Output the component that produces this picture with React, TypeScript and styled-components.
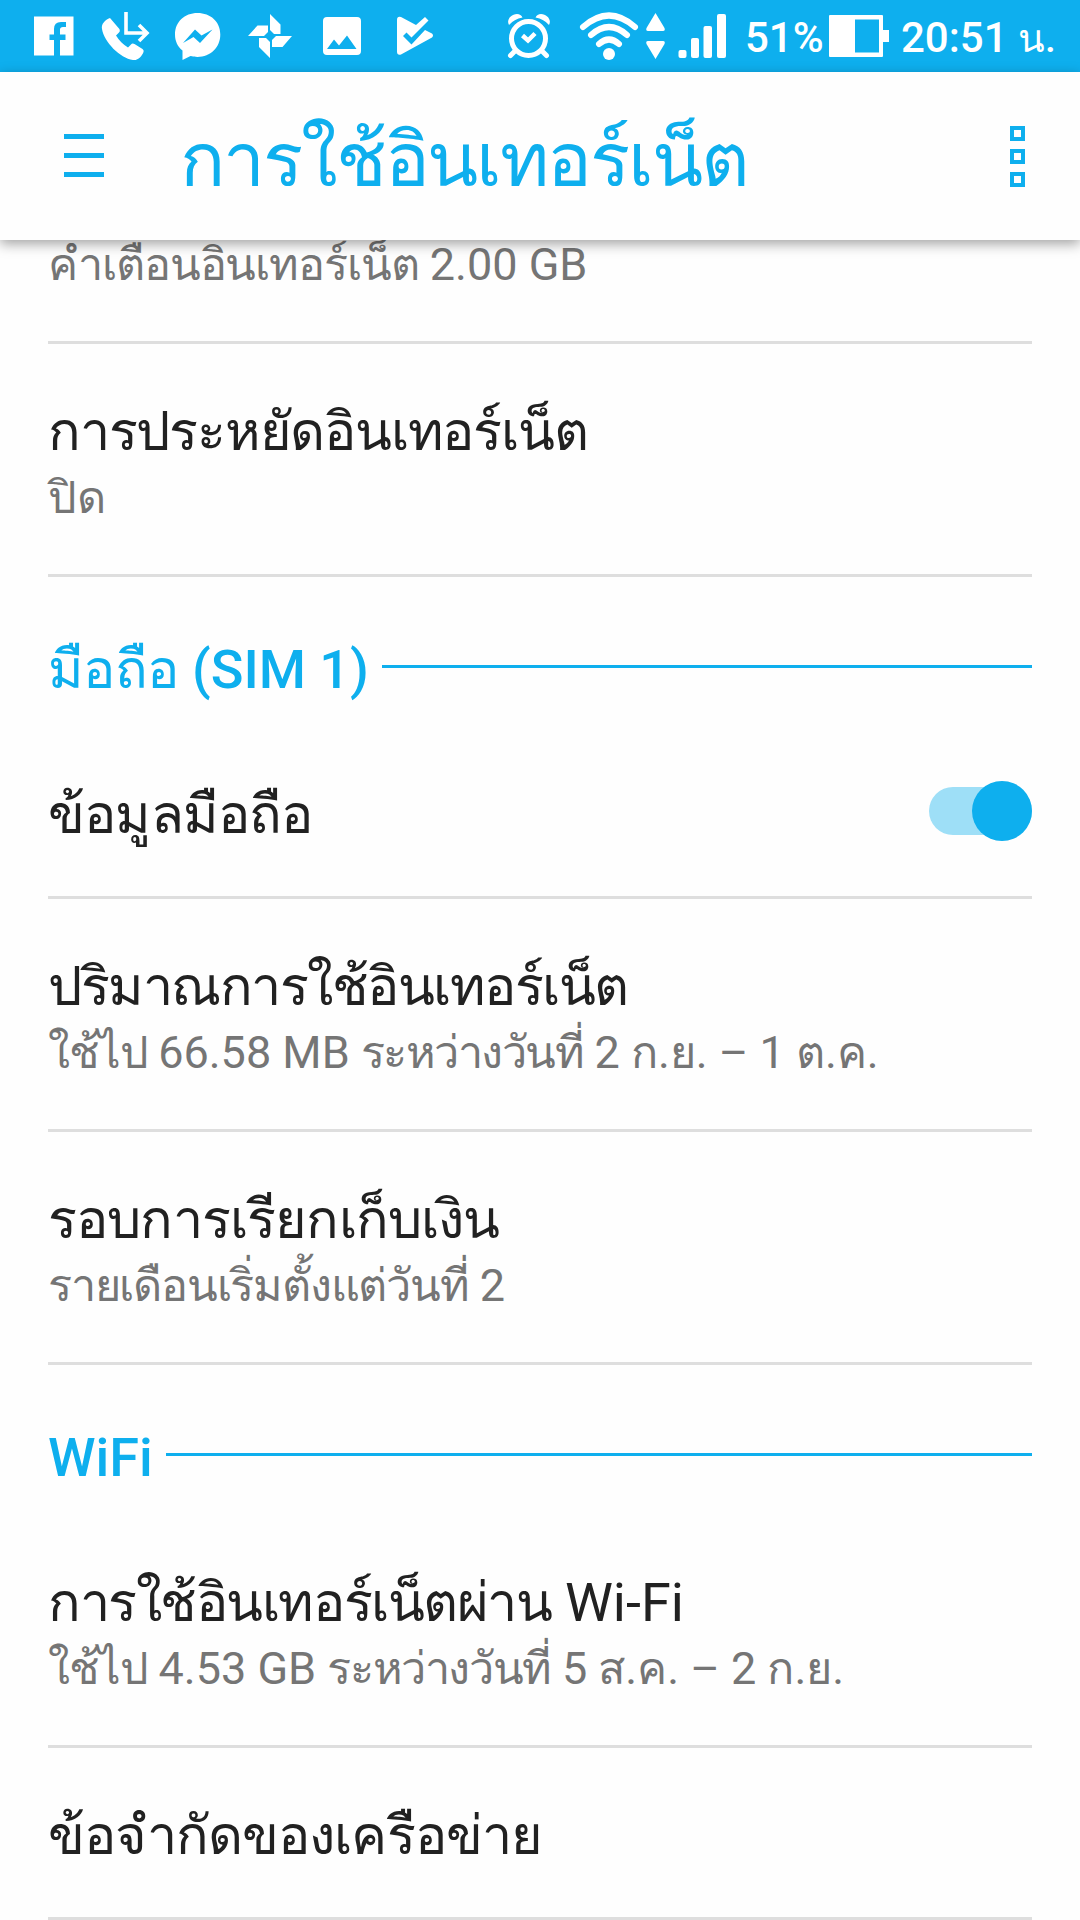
import React from 'react';
import styled, { createGlobalStyle } from 'styled-components';

const BLUE = '#0eafee';

const GlobalStyle = createGlobalStyle`
  body {
    margin: 0;
    background: #fefefe;
    font-family: Roboto, sans-serif;
  }
`;

const Screen = styled.div`
  display: flex;
  flex-direction: column;
  width: 1080px;
  height: 1920px;
  overflow: hidden;
`;

const StatusBar = styled.div`
  display: flex;
  justify-content: space-between;
  flex: none;
  height: 72px;
  background: ${BLUE};
`;

const StatusIcons = styled.svg<{ $w: number }>`
  flex: none;
  width: ${(p) => p.$w}px;
  height: 72px;
  fill: #fff;
`;

const StatusGroup = styled.div`
  display: flex;
  align-items: flex-start;
`;

const StatusText = styled.span<{ $w: number }>`
  width: ${(p) => p.$w}px;
  line-height: 76px;
  font-size: 42px;
  font-weight: 500;
  color: #fff;
  white-space: nowrap;
`;

const ClockSuffix = styled.span`
  font-size: 39px;
`;

const Toolbar = styled.header`
  position: relative;
  z-index: 1;
  display: flex;
  align-items: center;
  flex: none;
  height: 168px;
  padding: 0 55px 0 64px;
  box-sizing: border-box;
  background: #fefefe;
  box-shadow: 0 4px 12px rgba(0, 0, 0, 0.36);
`;

const MenuButton = styled.div`
  display: flex;
  flex-direction: column;
  gap: 14px;
  width: 40px;
  margin: 0 76px 1px 0;
`;

const MenuBar = styled.span`
  height: 5px;
  background: ${BLUE};
`;

const ToolbarTitle = styled.h1`
  flex: 1;
  margin: 0;
  padding-top: 7px;
  line-height: 120px;
  font-size: 75px;
  font-weight: 400;
  color: ${BLUE};
  white-space: nowrap;
`;

const MoreButton = styled.div`
  display: flex;
  flex-direction: column;
  gap: 8px;
  margin-top: 1px;
`;

const MoreSquare = styled.span`
  box-sizing: border-box;
  width: 15px;
  height: 15px;
  border: 4px solid ${BLUE};
`;

const List = styled.main`
  display: flex;
  flex-direction: column;
  padding: 0 48px;
`;

const Row = styled.section<{ $h: number }>`
  display: flex;
  align-items: center;
  justify-content: space-between;
  flex: none;
  box-sizing: border-box;
  height: ${(p) => p.$h}px;
  border-bottom: 3px solid #dedede;
`;

const RowText = styled.div<{ $top: number; $bottom: number }>`
  display: flex;
  flex-direction: column;
  padding: ${(p) => p.$top}px 0 ${(p) => p.$bottom}px;
`;

const Title = styled.div`
  line-height: 66px;
  font-size: 54px;
  color: #212121;
  white-space: nowrap;
`;

const Summary = styled.div`
  line-height: 66px;
  font-size: 45px;
  margin-top: -3px;
  padding-top: 3px;
  color: #757575;
  white-space: nowrap;
`;

const SectionHeader = styled.div`
  display: flex;
  align-items: center;
  flex: none;
  gap: 13px;
  height: 150px;
  padding-top: 29px;
  box-sizing: border-box;
`;

const SectionLabel = styled.h2`
  margin: 0;
  padding-top: 6px;
  line-height: 66px;
  font-size: 54px;
  font-weight: 500;
  color: ${BLUE};
  white-space: nowrap;
`;

const SectionRule = styled.span`
  flex: 1;
  height: 3px;
  background: ${BLUE};
`;

const ThaiRun = styled.span<{ $tracking: number }>`
  letter-spacing: ${(p) => p.$tracking}px;
`;

const Switch = styled.div`
  display: flex;
  align-items: center;
  justify-content: flex-end;
  width: 103px;
  height: 48px;
  margin-bottom: 1px;
  border-radius: 24px;
  background: #9edff7;
`;

const Thumb = styled.span`
  flex: none;
  width: 60px;
  height: 60px;
  border-radius: 50%;
  background: ${BLUE};
`;

const NotificationIcons = () => (
  <StatusIcons $w={440} viewBox="0 0 440 72">
    <path d="M34 16.500h39.500V55.500H60V40h5.500v-5.500H60V29.500q0-2.500 3-2.500h3v-5h-5q-7 0-7 7v5.500h-4.500V40H54v15.500H34z" />
    <path d="M110 18c-5 2-9 6-8 11 2 13 18 29 31 31 5 .8 9-4 10.500-8 .4-1.600 0-2-1-3l-8-5c-1.500-1-2.600-.6-3.500.4l-3 3c-5-3-9-7-12-12l3-3c1-1 1-2 .4-3.500z" />
    <path d="M126 12v21h21M139 25l8 8-8 8" fill="none" stroke="#fff" strokeWidth="3.600" />
    <path d="M197.500 13c-13 0-22.500 9-22.500 21.500 0 6.500 2.500 12 7.500 16V60l8-4c2 .5 4.500.9 7 .9 13 0 22.800-9.500 22.800-22.400S210.500 13 197.500 13zM183 43l12-13.500 6.500 6 11-6L200 43l-6.500-6z" fillRule="evenodd" />
    <path d="M270 14l10.500 10.500V34H274l-4-4zM292 36l-9.500 11H272v-7l4-4zM270 58l-11-11V38h7l4 4zM248 36l9.500-10.500H268V32l-4 4z" />
    <path d="M327 17h30q4 0 4 4v30q0 4-4 4h-30q-4 0-4-4V21q0-4 4-4zm0 32h29.500l-9.500-13.500-8 10-5-6z" fillRule="evenodd" />
    <path d="M397 20q0-4 4-3l15 8 9-8 3.500 3.500-17 17-5-5-3.500 3.500 8.500 8.500 13.500-14.500 7 3.500q2 2 0 4l-31 17q-4 1-4-3z" />
  </StatusIcons>
);

const ConnectivityIcons = () => (
  <StatusIcons $w={245} viewBox="500 0 245 72">
    <g fill="none" stroke="#fff" strokeWidth="5" strokeLinecap="round">
      <circle cx="528.500" cy="38.500" r="17" />
      <path d="M515 51l-4.500 4.500M542 51l4.500 4.500" />
      <path d="M522.500 35.500l5.500 5 7-7" strokeLinecap="butt" strokeWidth="4.500" />
    </g>
    <path d="M509 25c-3-5 2-11 8-11q4 0 5.500 3.500Q514 19 509 25zM549 25c3-5-2-11-8-11q-4 0-5.500 3.500Q544 19 549 25z" />
    <g fill="none" stroke="#fff" strokeWidth="6" strokeLinecap="round">
      <path d="M583 27q26-23 52 0M591 35q18-16 36 0M599 44q10-9 20 0" />
    </g>
    <circle cx="609" cy="54" r="6" />
    <path d="M655.500 13l9 15q1 3-1.500 3h-15q-2.500 0-1.500-3zM655.500 59l9-15q1-3-1.500-3h-15q-2.500 0-1.500 3z" />
    <rect x="678.500" y="50" width="8" height="8" rx="2" />
    <rect x="691" y="38" width="8" height="20" rx="2" />
    <rect x="703.500" y="26" width="8.500" height="32" rx="2" />
    <rect x="717" y="14" width="9" height="44" rx="2" />
  </StatusIcons>
);

const BatteryIcon = () => (
  <StatusIcons $w={72} viewBox="829 0 72 72">
    <path d="M830 15h52q1 0 1 1v14h6v12h-6v14q0 1-1 1h-52q-1 0-1-1V16q0-1 1-1zm25 4.500v33h24v-33z" fillRule="evenodd" />
  </StatusIcons>
);

/** Tightens Thai words while leaving digits, Latin text and abbreviations alone. */
const Mixed = ({ text, tracking }: { text: string; tracking: number }) => (
  <>
    {text.split(/([\u0e00-\u0e7f]{2,})/).map((part, i) =>
      i % 2 ? (
        <ThaiRun key={i} $tracking={tracking}>
          {part}
        </ThaiRun>
      ) : (
        part
      ),
    )}
  </>
);

type Item = {
  title?: string;
  titleTracking?: number;
  summary?: string;
  summaryTracking?: number;
  height: number;
  on?: boolean;
};

const ListRow = ({ title, titleTracking = -1.2, summary, summaryTracking = -1.2, height, on }: Item) => (
  <Row $h={height}>
    <RowText $top={!title ? 0 : summary ? 12 : 6} $bottom={title ? 0 : 52}>
      {title && (
        <Title>
          <Mixed text={title} tracking={titleTracking} />
        </Title>
      )}
      {summary && (
        <Summary>
          <Mixed text={summary} tracking={summaryTracking} />
        </Summary>
      )}
    </RowText>
    {on && (
      <Switch role="switch" aria-checked="true">
        <Thumb />
      </Switch>
    )}
  </Row>
);

const Section = ({ label }: { label: string }) => (
  <SectionHeader>
    <SectionLabel>
      <Mixed text={label} tracking={-0.6} />
    </SectionLabel>
    <SectionRule />
  </SectionHeader>
);

export default function App() {
  return (
    <Screen>
      <GlobalStyle />
      <StatusBar>
        <NotificationIcons />
        <StatusGroup>
          <ConnectivityIcons />
          <StatusText $w={84}>51%</StatusText>
          <BatteryIcon />
          <StatusText $w={179}>
            20:51 <ClockSuffix>น.</ClockSuffix>
          </StatusText>
        </StatusGroup>
      </StatusBar>
      <Toolbar>
        <MenuButton>
          <MenuBar />
          <MenuBar />
          <MenuBar />
        </MenuButton>
        <ToolbarTitle>
          <Mixed text="การใช้อินเทอร์เน็ต" tracking={-2.1} />
        </ToolbarTitle>
        <MoreButton>
          <MoreSquare />
          <MoreSquare />
          <MoreSquare />
        </MoreButton>
      </Toolbar>
      <List>
        <ListRow summary="คำเตือนอินเทอร์เน็ต 2.00 GB" summaryTracking={-1.1} height={104} />
        <ListRow title="การประหยัดอินเทอร์เน็ต" summary="ปิด" summaryTracking={0} height={233} />
        <Section label="มือถือ (SIM 1)" />
        <ListRow title="ข้อมูลมือถือ" titleTracking={-0.8} height={172} on />
        <ListRow
          title="ปริมาณการใช้อินเทอร์เน็ต"
          titleTracking={-1.5}
          summary="ใช้ไป 66.58 MB ระหว่างวันที่ 2 ก.ย. – 1 ต.ค."
          summaryTracking={-1.5}
          height={233}
        />
        <ListRow
          title="รอบการเรียกเก็บเงิน"
          titleTracking={-0.85}
          summary="รายเดือนเริ่มตั้งแต่วันที่ 2"
          height={233}
        />
        <Section label="WiFi" />
        <ListRow
          title="การใช้อินเทอร์เน็ตผ่าน Wi-Fi"
          titleTracking={-1.44}
          summary="ใช้ไป 4.53 GB ระหว่างวันที่ 5 ส.ค. – 2 ก.ย."
          summaryTracking={-1.4}
          height={233}
        />
        <ListRow title="ข้อจำกัดของเครือข่าย" titleTracking={-0.95} height={172} />
      </List>
    </Screen>
  );
}
